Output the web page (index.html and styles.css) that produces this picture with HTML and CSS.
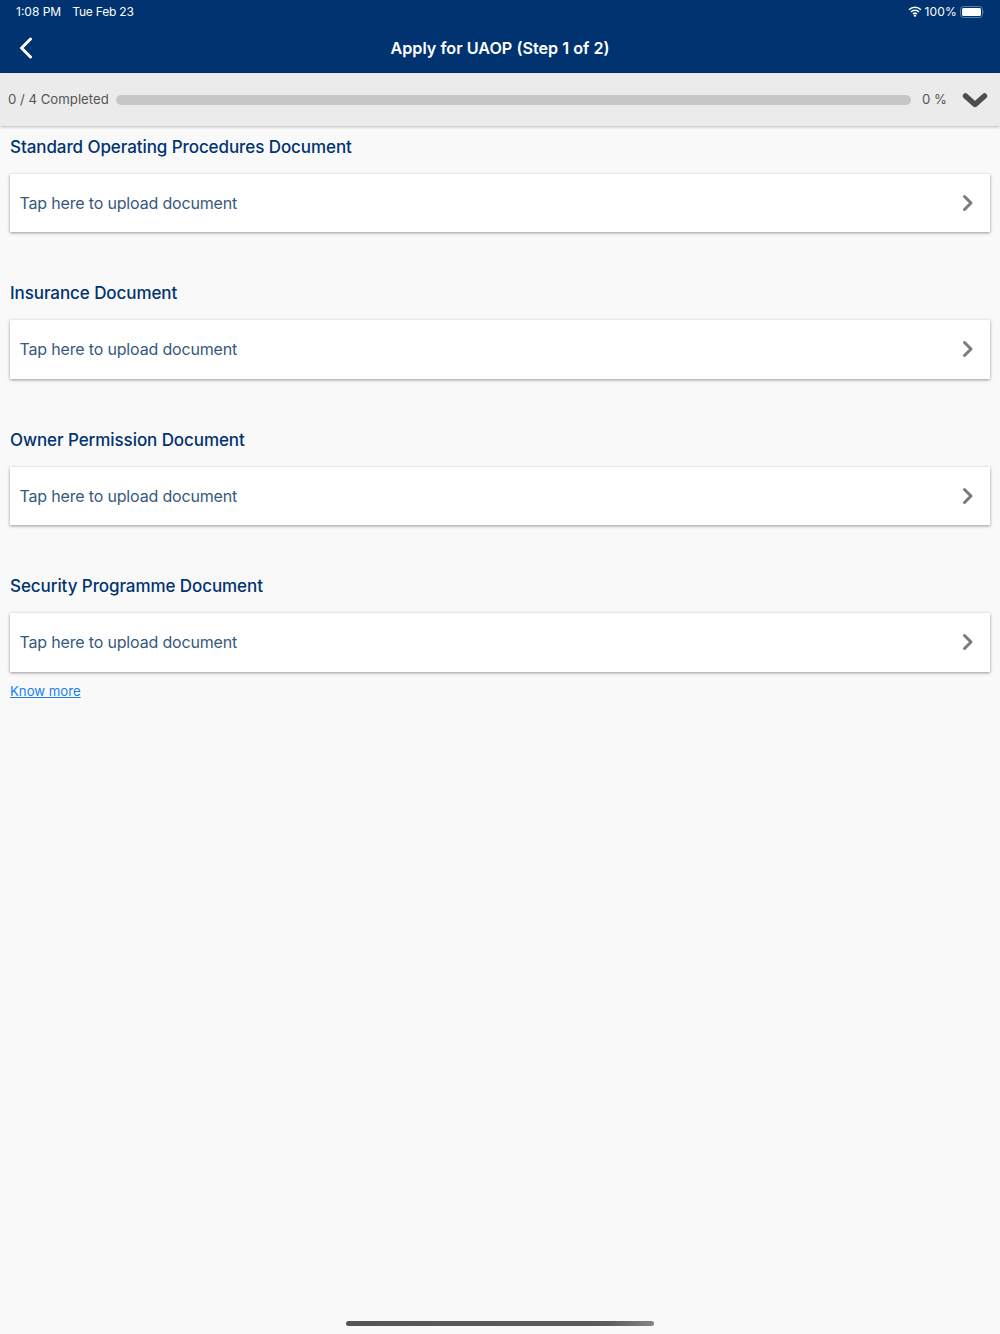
FILE: index.html
```html
<!DOCTYPE html>
<html lang="en">
<head>
<meta charset="utf-8">
<title>Apply for UAOP</title>
<link rel="stylesheet" href="styles.css">
</head>
<body>
<header class="top">
  <div class="status">
    <span class="status-time">1:08 PM</span>
    <span class="status-date">Tue Feb 23</span>
    <span class="status-right">
      <svg class="wifi" width="14" height="11" viewBox="0 0 14 11"><path d="M1 3.800a8.600 8.600 0 0 1 12 0M3 5.900a5.700 5.700 0 0 1 8 0M5 8a2.900 2.900 0 0 1 4 0" fill="none" stroke="#fff" stroke-width="1.500"/><circle cx="7" cy="9.600" r="1.200" fill="#fff"/></svg>
      <span class="status-batt">100%</span>
      <svg class="battery" width="26" height="12" viewBox="0 0 26 12"><rect x="1.500" y="0.500" width="22" height="11" rx="3" fill="none" stroke="#5a7cab"/><rect x="3" y="2" width="19" height="8" rx="1.500" fill="#fff"/><path d="M24.500 4.500c.4.300.6.900.6 1.500s-.2 1.200-.6 1.500z" fill="#5a7cab"/></svg>
    </span>
  </div>
  <div class="nav">
    <svg class="back" width="16" height="22" viewBox="0 0 16 22"><path d="M12.500 2 3.500 11l9 9" fill="none" stroke="#fff" stroke-width="3" stroke-linecap="round" stroke-linejoin="round"/></svg>
    <h1 class="nav-title">Apply for UAOP (Step 1 of 2)</h1>
  </div>
</header>
<section class="progress">
  <span class="progress-label">0 / 4 Completed</span>
  <div class="progress-track"></div>
  <span class="progress-pct">0 %</span>
  <svg class="progress-toggle" width="26" height="16" viewBox="0 0 26 16"><path d="M3.500 4 13 12.500 22.500 4" fill="none" stroke="#4d4d4d" stroke-width="5.500" stroke-linecap="round" stroke-linejoin="round"/></svg>
</section>
<main class="content">
  <section class="doc">
    <h2 class="doc-title">Standard Operating Procedures Document</h2>
    <div class="card"><span class="card-text">Tap here to upload document</span><svg class="chev" width="12" height="18" viewBox="0 0 12 18"><path d="M2.500 2.500 9 9l-6.500 6.500" fill="none" stroke="#7b7b7b" stroke-width="3" stroke-linecap="round" stroke-linejoin="round"/></svg></div>
  </section>
  <section class="doc">
    <h2 class="doc-title">Insurance Document</h2>
    <div class="card"><span class="card-text">Tap here to upload document</span><svg class="chev" width="12" height="18" viewBox="0 0 12 18"><path d="M2.500 2.500 9 9l-6.500 6.500" fill="none" stroke="#7b7b7b" stroke-width="3" stroke-linecap="round" stroke-linejoin="round"/></svg></div>
  </section>
  <section class="doc">
    <h2 class="doc-title">Owner Permission Document</h2>
    <div class="card"><span class="card-text">Tap here to upload document</span><svg class="chev" width="12" height="18" viewBox="0 0 12 18"><path d="M2.500 2.500 9 9l-6.500 6.500" fill="none" stroke="#7b7b7b" stroke-width="3" stroke-linecap="round" stroke-linejoin="round"/></svg></div>
  </section>
  <section class="doc">
    <h2 class="doc-title">Security Programme Document</h2>
    <div class="card"><span class="card-text">Tap here to upload document</span><svg class="chev" width="12" height="18" viewBox="0 0 12 18"><path d="M2.500 2.500 9 9l-6.500 6.500" fill="none" stroke="#7b7b7b" stroke-width="3" stroke-linecap="round" stroke-linejoin="round"/></svg></div>
  </section>
  <a class="more" href="#">Know more</a>
</main>
<div class="home-bar"></div>
</body>
</html>
```
FILE: styles.css
```css
* { box-sizing: border-box; }
html, body { margin: 0; height: 100%; }
body {
  width: 1000px;
  height: 1334px;
  background: #f9f9f9;
  font-family: Inter, "Noto Sans", sans-serif;
  display: flex;
  flex-direction: column;
  overflow: hidden;
}
.top { background: #003370; color: #fff; height: 73px; flex: none; }
.status {
  height: 24px;
  padding: 0 15px 1px 16px;
  display: flex;
  align-items: center;
  font-size: 12px;
  gap: 11px;
}
.status-date { letter-spacing: -0.2px; }
.status-right { margin-left: auto; display: flex; align-items: center; gap: 4px; }
.status-batt { margin-left: -2px; margin-right: -2px; letter-spacing: 0.2px; }
.nav { position: relative; height: 48px; display: flex; align-items: center; justify-content: center; }
.back { position: absolute; left: 18px; top: 13px; }
.nav-title { margin: 0; font-size: 16.200px; font-weight: 600; }
.progress {
  height: 53px;
  flex: none;
  background: #ebebeb;
  display: flex;
  align-items: center;
  padding: 0 12px 0 8px;
  box-shadow: 0 1px 3px rgba(0,0,0,.25);
  position: relative;
  color: #555;
  font-size: 13.200px;
}
.progress-label { width: 108px; flex: none; margin-bottom: 2px; }
.progress-track { flex: none; width: 795px; height: 10px; border-radius: 5px; background: #c6c6c6; margin-right: 11px; }
.progress-pct { width: 28px; flex: none; margin-bottom: 2px; }
.progress-toggle { margin-left: auto; }
.content { padding: 0 10px; flex: 1; display: flex; flex-direction: column; }
.doc { padding-top: 8.500px; }
.doc + .doc { margin-top: 49px; padding-top: 0; }
.doc-title { margin: 0 0 15px; font-size: 17px; letter-spacing: -0.08px; line-height: 24px; font-weight: 500; color: #003370; }
.card {
  height: 58.500px;
  background: #fff;
  display: flex;
  align-items: center;
  justify-content: space-between;
  padding: 0 16px 0 9.500px;
  box-shadow: 0 1px 3px rgba(0,0,0,.4);
}
.card-text { font-size: 16px; letter-spacing: -0.17px; color: #36597e; }
.more { align-self: flex-start; color: #1a80f0; font-size: 13.200px; margin-top: 11px; }
.home-bar {
  flex: none;
  width: 308px;
  height: 5px;
  margin: 0 auto 8px;
  border-radius: 3px;
  background: linear-gradient(90deg, #555 0%, #5c5c5c 85%, #858585 100%);
}
```
